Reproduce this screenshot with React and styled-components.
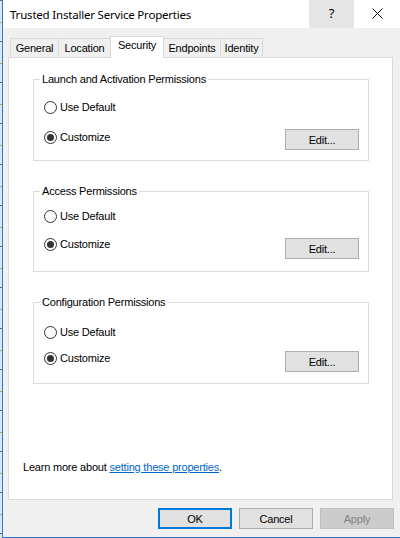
import React from "react";
import styled, { createGlobalStyle } from "styled-components";

const GROUPS = [
  { title: "Launch and Activation Permissions", padTop: 19, gap: 14, shift: 0, height: 82 },
  { title: "Access Permissions", padTop: 16, gap: 12, shift: 2, height: 81 },
  { title: "Configuration Permissions", padTop: 21, gap: 10, shift: 1, height: 82 },
];

const TABS = [
  { label: "General", width: 49 },
  { label: "Location", width: 53 },
  { label: "Security", width: 54, active: true },
  { label: "Endpoints", width: 58 },
  { label: "Identity", width: 43 },
];

const GlobalStyle = createGlobalStyle`
  html, body {
    margin: 0;
    padding: 0;
    background: #f0f0f0;
  }
  #root {
    width: 400px;
    height: 538px;
  }
`;

function Radio({ checked, children }) {
  return (
    <RadioLabel>
      <RadioCircle>{checked && <RadioDot />}</RadioCircle>
      {children}
    </RadioLabel>
  );
}

function App() {
  return (
    <Screen>
      <GlobalStyle />
      <DesktopStrip />
      <Window>
        <TitleBar>
          <Title>Trusted Installer Service Properties</Title>
          <HelpButton>?</HelpButton>
          <CloseButton>
            <svg width="11" height="11" viewBox="0 0 11 11">
              <path d="M0.5 0.5 L10.5 10.5 M10.5 0.5 L0.5 10.5" stroke="#000" strokeWidth="1" fill="none" />
            </svg>
          </CloseButton>
        </TitleBar>

        <Body>
          <TabRow>
            {TABS.map((t) => (
              <Tab key={t.label} $active={t.active} $width={t.width}>
                {t.label}
              </Tab>
            ))}
          </TabRow>

          <Panel>
            <Groups>
              {GROUPS.map((g) => (
                <Group key={g.title} $padTop={g.padTop} $height={g.height}>
                  <Legend>{g.title}</Legend>
                  <Radio>Use Default</Radio>
                  <CustomRow $gap={g.gap}>
                    <Radio checked>Customize</Radio>
                    <Button $shift={g.shift}>Edit...</Button>
                  </CustomRow>
                </Group>
              ))}
            </Groups>

            <LearnMore>
              Learn more about <Link>setting these properties</Link>.
            </LearnMore>
          </Panel>

          <Footer>
            <DialogButton $primary>OK</DialogButton>
            <DialogButton>Cancel</DialogButton>
            <DialogButton $disabled>Apply</DialogButton>
          </Footer>
        </Body>
      </Window>
    </Screen>
  );
}

const Screen = styled.div`
  display: flex;
  width: 400px;
  height: 538px;
  font-family: "Liberation Sans", Arial, sans-serif;
  font-size: 11px;
  letter-spacing: -0.2px;
  color: #000;
`;

const DesktopStrip = styled.div`
  width: 2px;
  flex-shrink: 0;
  background: repeating-linear-gradient(
    to bottom,
    #5b6d80 0 1px,
    #dce6f0 1px 22px,
    #d99a4a 22px 23px,
    #dce6f0 23px 41px
  );
`;

const Window = styled.div`
  flex: 1;
  display: flex;
  flex-direction: column;
  border-left: 1px solid #2b7ad0;
  border-bottom: 1px solid #2b7ad0;
  background: #f0f0f0;
`;

const TitleBar = styled.div`
  height: 28px;
  display: flex;
  align-items: stretch;
  background: #fff;
`;

const Title = styled.div`
  flex: 1;
  padding-left: 7px;
  display: flex;
  align-items: center;
  font-family: "Noto Sans", "Open Sans", sans-serif;
  font-size: 11.5px;
  letter-spacing: -0.2px;
  color: #000;
`;

const HelpButton = styled.div`
  width: 45px;
  background: #e5e5e5;
  display: flex;
  align-items: center;
  justify-content: center;
  font-family: "Noto Sans", sans-serif;
  font-size: 13px;
  padding-bottom: 2px;
  box-sizing: border-box;
`;

const CloseButton = styled.div`
  width: 46px;
  display: flex;
  align-items: center;
  justify-content: center;
  padding-bottom: 2px;
  box-sizing: border-box;
`;

const Body = styled.div`
  flex: 1;
  display: flex;
  flex-direction: column;
  padding: 8px 7px 0 5px;
`;

const TabRow = styled.div`
  display: flex;
  align-items: flex-end;
  height: 21px;
  padding-left: 2px;
`;

const Tab = styled.div`
  position: relative;
  box-sizing: border-box;
  width: ${(p) => p.$width}px;
  height: ${(p) => (p.$active ? 22 : 19)}px;
  margin-right: -1px;
  margin-bottom: ${(p) => (p.$active ? -1 : 0)}px;
  z-index: ${(p) => (p.$active ? 1 : 0)};
  border: 1px solid #d9d9d9;
  border-bottom: none;
  background: ${(p) => (p.$active ? "#fff" : "#f0f0f0")};
  display: flex;
  justify-content: center;
  padding-top: ${(p) => (p.$active ? 2 : 3)}px;
  line-height: 13px;
`;

const Panel = styled.div`
  height: 443px;
  box-sizing: border-box;
  border: 1px solid #d9d9d9;
  background: #fff;
  display: flex;
  flex-direction: column;
  padding: 21px 0 25px 14px;
`;

const Groups = styled.div`
  display: flex;
  flex-direction: column;
  gap: 30px;
  padding-left: 10px;
`;

const Group = styled.div`
  position: relative;
  box-sizing: border-box;
  width: 336px;
  height: ${(p) => p.$height}px;
  border: 1px solid #dcdcdc;
  padding: ${(p) => p.$padTop}px 9px 0 10px;
`;

const Legend = styled.div`
  position: absolute;
  top: -7px;
  left: 6px;
  padding: 0 2px 0 2px;
  background: #fff;
  line-height: 13px;
  color: #000;
`;

const RadioLabel = styled.div`
  display: flex;
  align-items: center;
  gap: 3px;
  height: 16px;
  line-height: 13px;
`;

const RadioCircle = styled.span`
  box-sizing: border-box;
  width: 13px;
  height: 13px;
  border: 1px solid #333;
  border-radius: 50%;
  background: #fff;
  display: flex;
  align-items: center;
  justify-content: center;
`;

const RadioDot = styled.span`
  width: 7px;
  height: 7px;
  border-radius: 50%;
  background: #333;
`;

const CustomRow = styled.div`
  display: flex;
  justify-content: space-between;
  align-items: flex-start;
  margin-top: ${(p) => p.$gap}px;
`;

const Button = styled.div`
  box-sizing: border-box;
  width: 74px;
  height: 21px;
  margin-top: ${(p) => p.$shift}px;
  border: 1px solid #adadad;
  background: #e1e1e1;
  display: flex;
  align-items: center;
  justify-content: center;
`;

const LearnMore = styled.div`
  margin-top: auto;
  line-height: 13px;
`;

const Link = styled.span`
  color: #0066cc;
  text-decoration: underline;
`;

const Footer = styled.div`
  display: flex;
  justify-content: flex-end;
  gap: 7px;
  padding-top: 8px;
  margin-right: -1px;
`;

const DialogButton = styled.div`
  box-sizing: border-box;
  width: 74px;
  height: 21px;
  border: ${(p) => (p.$primary ? "2px solid #0078d7" : p.$disabled ? "1px solid #bfbfbf" : "1px solid #adadad")};
  background: ${(p) => (p.$disabled ? "#cccccc" : "#e1e1e1")};
  color: ${(p) => (p.$disabled ? "#838383" : "#000")};
  display: flex;
  align-items: center;
  justify-content: center;
`;

export default App;
